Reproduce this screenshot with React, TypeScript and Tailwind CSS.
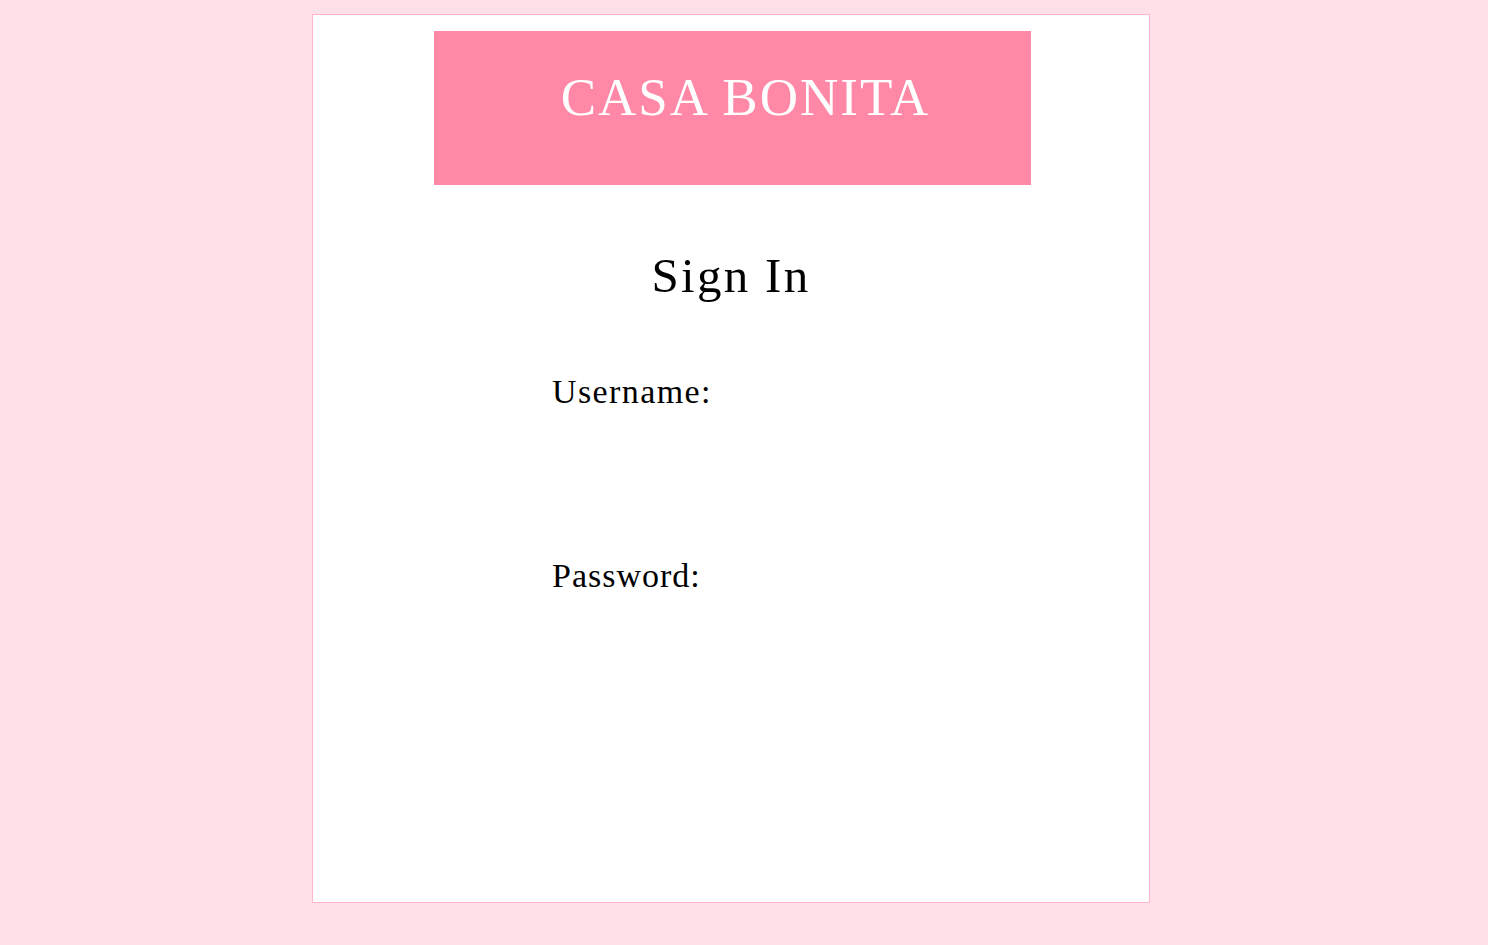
export default function App() {
  return (
    <div
      className="min-h-screen bg-[#ffe0e8] pt-[14px]"
      style={{ fontFamily: '"Liberation Serif", "Times New Roman", serif' }}
    >
      <div className="ml-[312px] w-[838px] h-[889px] bg-white border border-[#ffb6c8] flex flex-col">
        <div className="mt-[16px] ml-[121px] w-[597px] h-[154px] bg-[#ff88a7] pt-[40px] pl-[26px] text-center">
          <h1 className="text-[53px] leading-none text-white tracking-[2px]">CASA BONITA</h1>
        </div>

        <h2 className="mt-[66px] text-center text-[49px] leading-none text-black tracking-[2.3px]">
          Sign In
        </h2>

        <form className="ml-[239px] flex flex-col">
          <label className="mt-[75px] text-[34px] leading-none text-black tracking-[1.4px]">
            Username:
          </label>
          <label className="mt-[150px] text-[34px] leading-none text-black tracking-[1px]">
            Password:
          </label>
        </form>
      </div>
    </div>
  );
}
